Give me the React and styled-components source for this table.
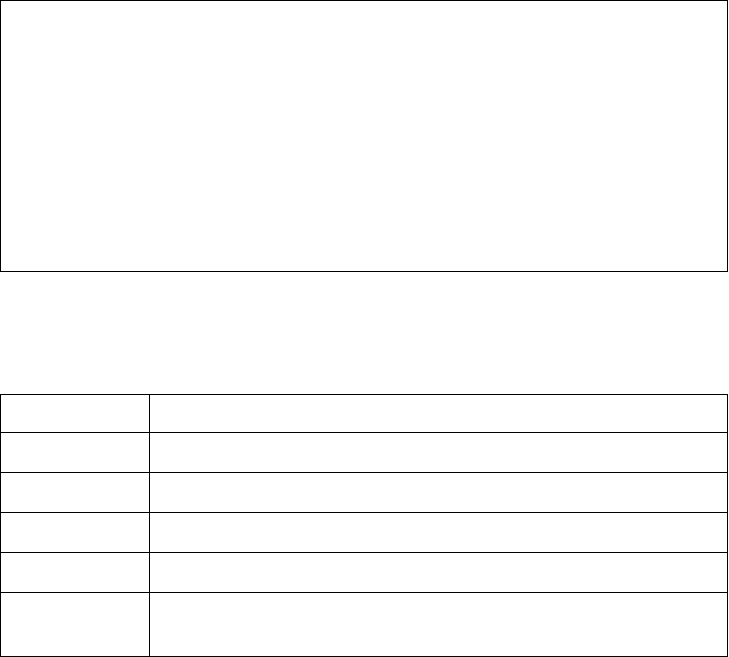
import React from 'react';
import styled, { createGlobalStyle } from 'styled-components';

const GlobalStyle = createGlobalStyle`
  html, body {
    margin: 0;
    padding: 0;
    background: #fff;
    font-family: "Liberation Sans", Arial, sans-serif;
  }
  * { box-sizing: border-box; }
`;

const Page = styled.div`
  width: 729px;
  display: flex;
  flex-direction: column;
  gap: 122px;
`;

const Panel = styled.div`
  width: 728px;
  height: 272px;
  border: 1px solid #000;
`;

const Grid = styled.div`
  width: 728px;
  border-top: 1px solid #000;
  border-left: 1px solid #000;
  display: flex;
  flex-direction: column;
`;

const Row = styled.div`
  display: grid;
  grid-template-columns: 149px 578px;
  height: ${p => p.$h}px;
`;

const Cell = styled.div`
  border-right: 1px solid #000;
  border-bottom: 1px solid #000;
  padding: 4px 8px;
  font-size: 14px;
`;

const rows = [38, 40, 40, 40, 40, 64];

export default function App() {
  return (
    <Page>
      <GlobalStyle />
      <Panel />
      <Grid>
        {rows.map((h, i) => (
          <Row key={i} $h={h}>
            <Cell />
            <Cell />
          </Row>
        ))}
      </Grid>
    </Page>
  );
}
